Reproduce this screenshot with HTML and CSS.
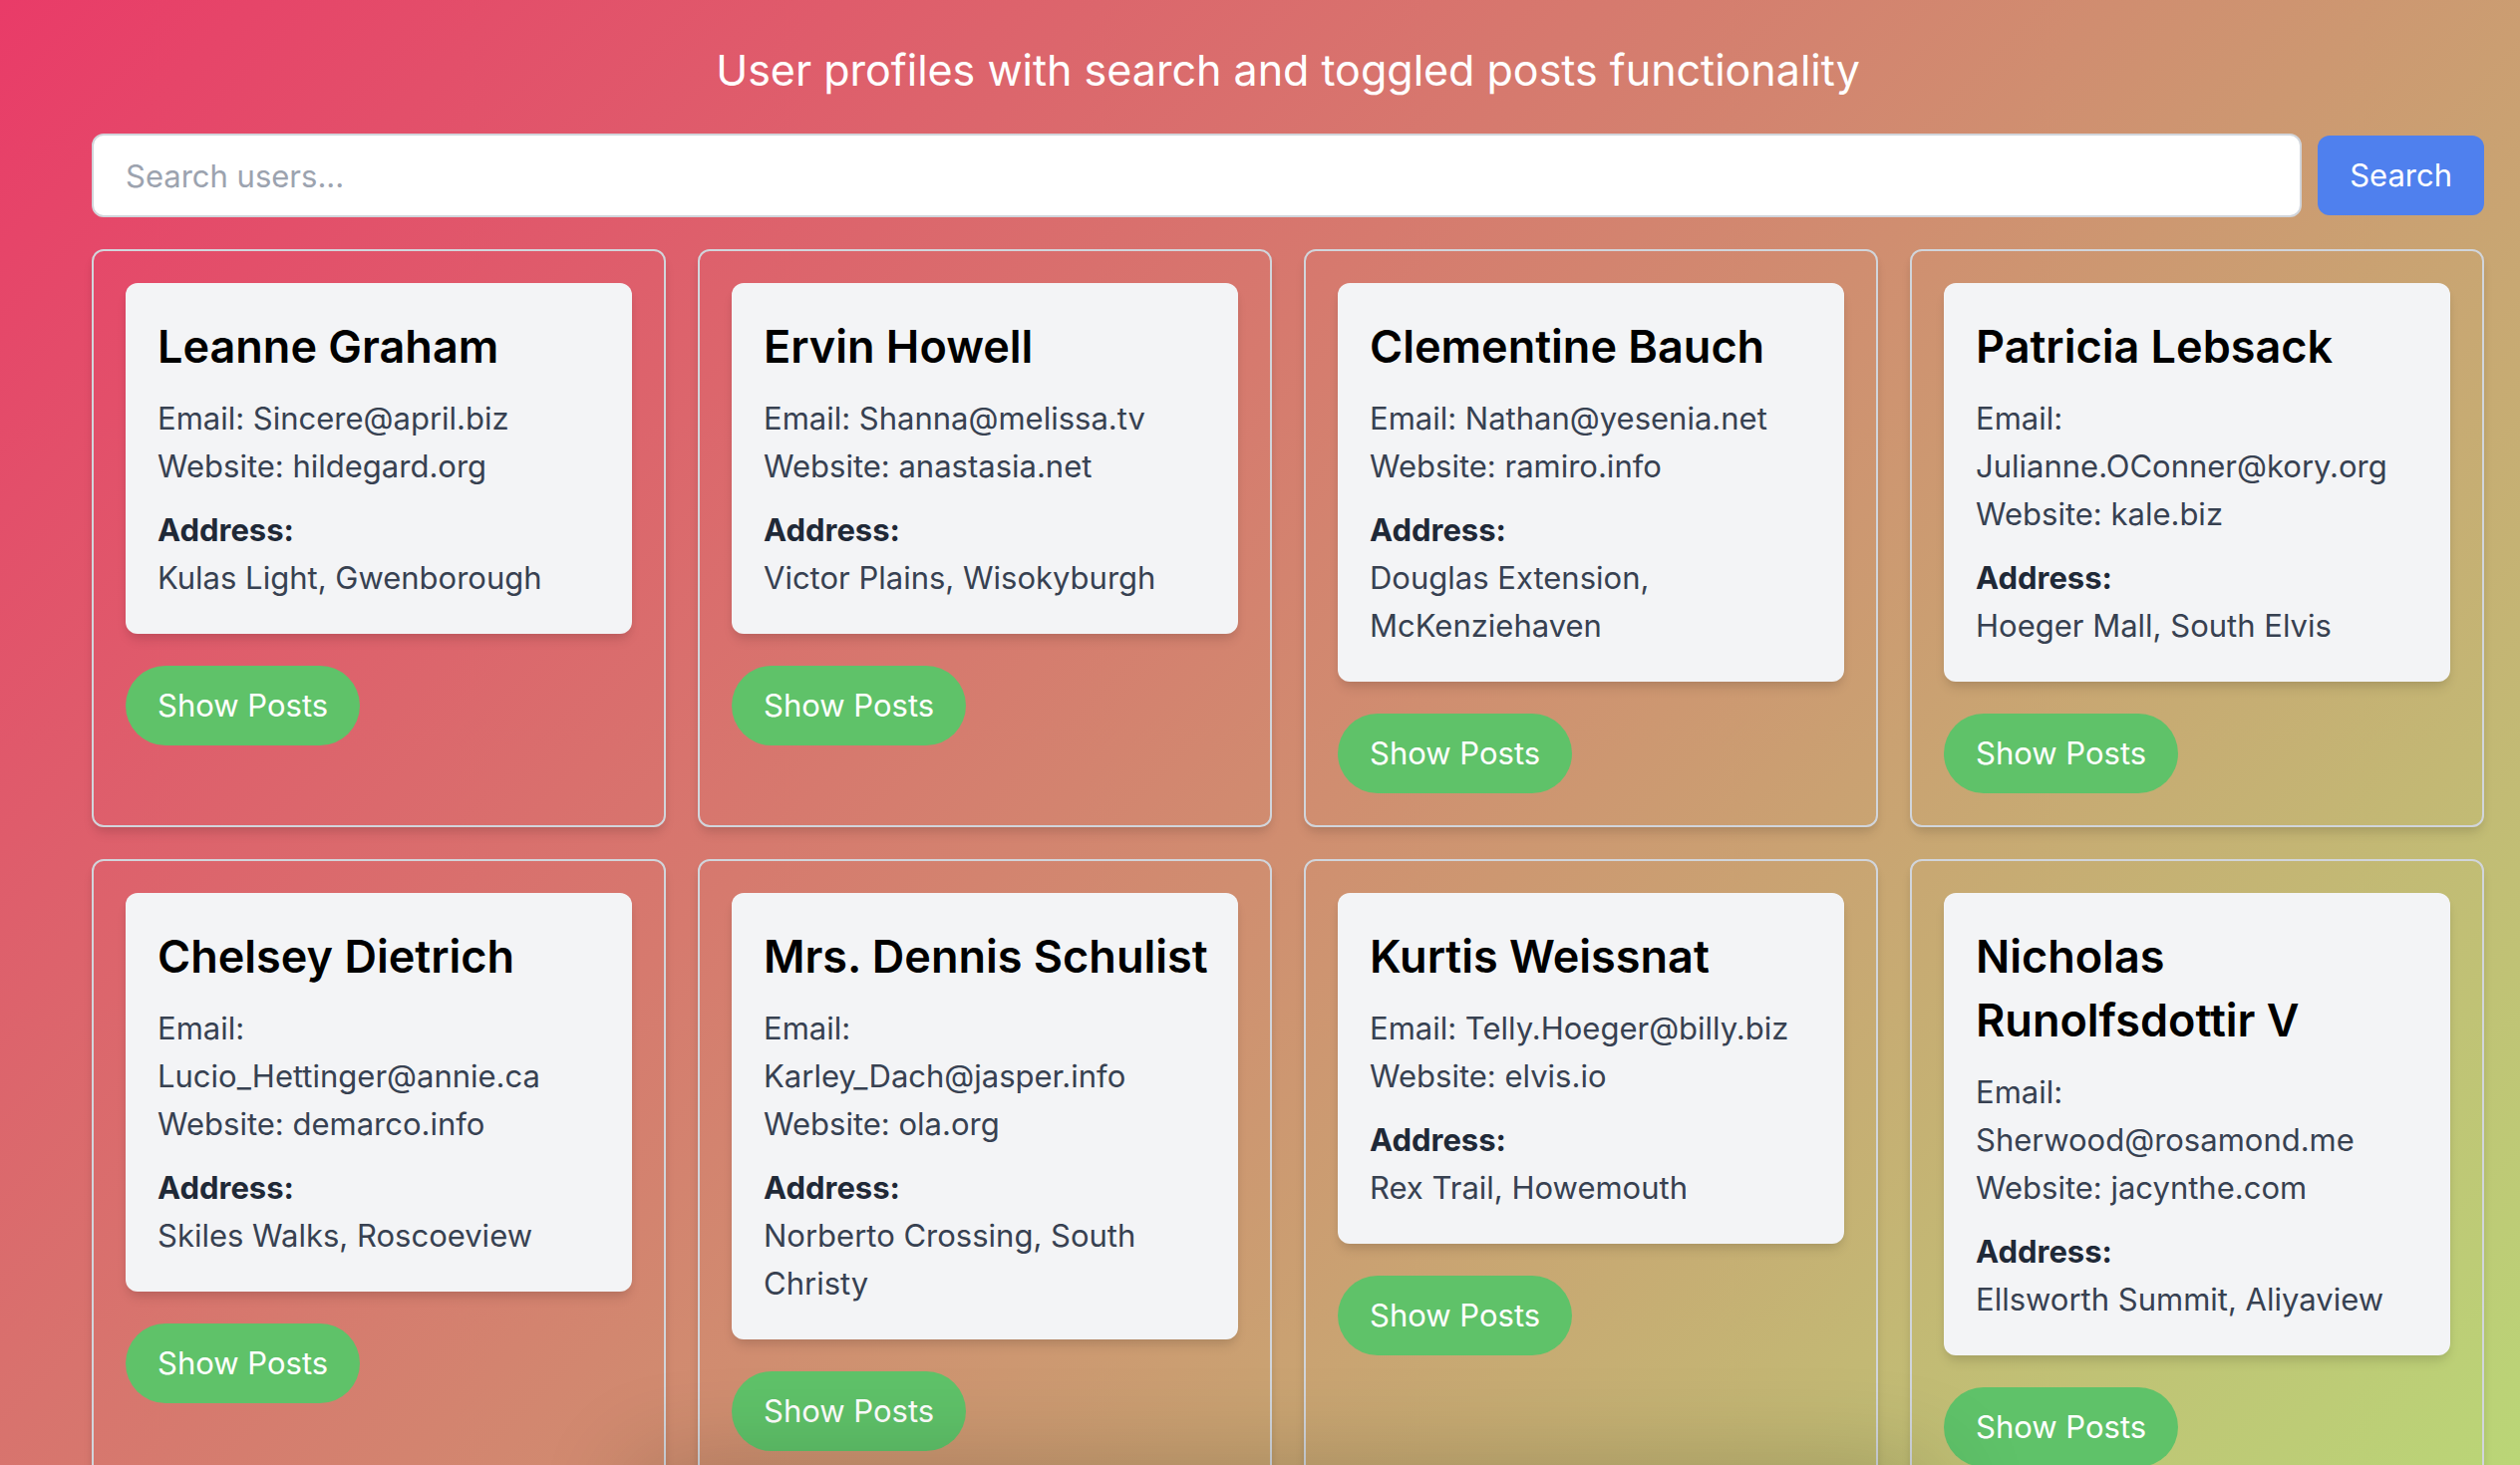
FILE: index.html
```html
<!DOCTYPE html>
<html lang="en">
<head>
<meta charset="utf-8">
<meta name="viewport" content="width=device-width, initial-scale=1">
<title>User profiles</title>
<link rel="stylesheet" href="styles.css">
</head>
<body>
<main class="page">
  <h1 class="page-title">User profiles with search and toggled posts functionality</h1>
  <form class="search" role="search">
    <input class="search-input" type="text" placeholder="Search users..." aria-label="Search users">
    <button class="search-button" type="button">Search</button>
  </form>
  <section class="users">
    <article class="user">
      <div class="profile">
        <h2 class="name">Leanne Graham</h2>
        <p>Email: Sincere@april.biz</p>
        <p>Website: hildegard.org</p>
        <h3 class="label">Address:</h3>
        <p>Kulas Light, Gwenborough</p>
      </div>
      <button class="toggle" type="button">Show Posts</button>
    </article>
    <article class="user">
      <div class="profile">
        <h2 class="name">Ervin Howell</h2>
        <p>Email: Shanna@melissa.tv</p>
        <p>Website: anastasia.net</p>
        <h3 class="label">Address:</h3>
        <p>Victor Plains, Wisokyburgh</p>
      </div>
      <button class="toggle" type="button">Show Posts</button>
    </article>
    <article class="user">
      <div class="profile">
        <h2 class="name">Clementine Bauch</h2>
        <p>Email: Nathan@yesenia.net</p>
        <p>Website: ramiro.info</p>
        <h3 class="label">Address:</h3>
        <p>Douglas Extension, McKenziehaven</p>
      </div>
      <button class="toggle" type="button">Show Posts</button>
    </article>
    <article class="user">
      <div class="profile">
        <h2 class="name">Patricia Lebsack</h2>
        <p>Email: Julianne.OConner@kory.org</p>
        <p>Website: kale.biz</p>
        <h3 class="label">Address:</h3>
        <p>Hoeger Mall, South Elvis</p>
      </div>
      <button class="toggle" type="button">Show Posts</button>
    </article>
    <article class="user">
      <div class="profile">
        <h2 class="name">Chelsey Dietrich</h2>
        <p>Email: Lucio_Hettinger@annie.ca</p>
        <p>Website: demarco.info</p>
        <h3 class="label">Address:</h3>
        <p>Skiles Walks, Roscoeview</p>
      </div>
      <button class="toggle" type="button">Show Posts</button>
    </article>
    <article class="user">
      <div class="profile">
        <h2 class="name">Mrs. Dennis Schulist</h2>
        <p>Email: Karley_Dach@jasper.info</p>
        <p>Website: ola.org</p>
        <h3 class="label">Address:</h3>
        <p>Norberto Crossing, South Christy</p>
      </div>
      <button class="toggle" type="button">Show Posts</button>
    </article>
    <article class="user">
      <div class="profile">
        <h2 class="name">Kurtis Weissnat</h2>
        <p>Email: Telly.Hoeger@billy.biz</p>
        <p>Website: elvis.io</p>
        <h3 class="label">Address:</h3>
        <p>Rex Trail, Howemouth</p>
      </div>
      <button class="toggle" type="button">Show Posts</button>
    </article>
    <article class="user">
      <div class="profile">
        <h2 class="name">Nicholas Runolfsdottir V</h2>
        <p>Email: Sherwood@rosamond.me</p>
        <p>Website: jacynthe.com</p>
        <h3 class="label">Address:</h3>
        <p>Ellsworth Summit, Aliyaview</p>
      </div>
      <button class="toggle" type="button">Show Posts</button>
    </article>
  </section>
</main>
</body>
</html>
```
FILE: styles.css
```css
*, *::before, *::after { box-sizing: border-box; }

html { scrollbar-width: none; }

body {
  margin: 0;
  min-height: 100vh;
  font-family: Inter, "Liberation Sans", sans-serif;
  font-size: 31px;
  line-height: 48px;
  color: #374151;
  background: linear-gradient(135deg, #e93b68, #bad677) fixed;
}

/* soft shade rising from the bottom edge of the window */
body::after {
  content: "";
  position: fixed;
  left: 26%;
  right: 24%;
  bottom: -80px;
  height: 60px;
  box-shadow: 0 0 100px 20px rgba(0, 0, 0, 0.2);
  pointer-events: none;
}

h1, h2, h3, p { margin: 0; }

button, input { font: inherit; }

button {
  border: 0;
  padding: 16px 32px;
  color: #fff;
  cursor: pointer;
}

.page { padding: 38px 36px 32px 92px; }

.page-title {
  margin-bottom: 32px;
  font-size: 43px;
  font-weight: 400;
  line-height: 64px;
  text-align: center;
  color: #fff;
}

.search {
  display: flex;
  align-items: center;
  gap: 16px;
  margin-bottom: 32px;
}

.search-input {
  flex: 1;
  min-width: 0;
  height: 84px;
  padding: 16px 32px;
  border: 2px solid #d1d5db;
  border-radius: 12px;
  background: #fff;
}

.search-input::placeholder { color: #9ca3af; opacity: 1; }

.search-button { border-radius: 12px; background: #4f80ee; }

.users {
  display: grid;
  grid-template-columns: repeat(4, minmax(0, 1fr));
  gap: 32px;
}

.user {
  padding: 32px;
  border: 2px solid #d1d5db;
  border-radius: 12px;
}

.user, .profile {
  box-shadow: 0 8px 12px -2px rgba(0, 0, 0, 0.1), 0 4px 8px -2px rgba(0, 0, 0, 0.06);
}

.profile {
  margin-bottom: 32px;
  padding: 32px;
  border-radius: 12px;
  background: #f3f4f6;
}

/* names may run a little into the card's right padding before they wrap */
.name {
  margin: 0 -16px 16px 0;
  font-size: 45px;
  font-weight: 600;
  line-height: 64px;
  color: #000;
}

.label {
  margin-top: 16px;
  font-size: inherit;
  font-weight: 700;
  color: #1f2937;
}

.toggle { border-radius: 40px; background: #5fc269; }
```
